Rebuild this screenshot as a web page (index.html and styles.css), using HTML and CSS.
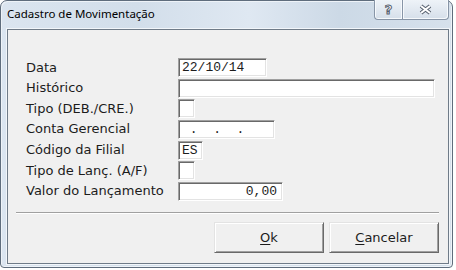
FILE: index.html
```html
<!DOCTYPE html>
<html lang="pt-BR">
<head>
<meta charset="utf-8">
<title>Cadastro de Movimentação</title>
<link rel="stylesheet" href="styles.css">
</head>
<body>
<div class="window">
  <div class="titlebar">
    <span class="title">Cadastro de Movimentação</span>
    <div class="caption-buttons">
      <div class="cbtn help"><span class="qmark">?</span></div>
      <div class="cbtn close">
        <svg width="13" height="11" viewBox="0 0 13 11">
          <path d="M2 2 L11 9 M11 2 L2 9" stroke="#56606e" stroke-width="4" fill="none"/>
          <path d="M2 2 L11 9 M11 2 L2 9" stroke="#ffffff" stroke-width="2" fill="none"/>
        </svg>
      </div>
    </div>
  </div>
  <div class="client">
    <div class="form">
      <span class="lbl">Data</span><input class="fld w-data" type="text" value="22/10/14" readonly>
      <span class="lbl">Histórico</span><input class="fld w-hist" type="text" value="" readonly>
      <span class="lbl">Tipo (DEB./CRE.)</span><input class="fld w-chk" type="text" value="" readonly>
      <span class="lbl">Conta Gerencial</span><input class="fld w-conta" type="text" value=" .  .  . " readonly>
      <span class="lbl">Código da Filial</span><input class="fld w-cod" type="text" value="ES" readonly>
      <span class="lbl">Tipo de Lanç. (A/F)</span><input class="fld w-chk" type="text" value="" readonly>
      <span class="lbl">Valor do Lançamento</span><input class="fld w-valor num" type="text" value="0,00" readonly>
    </div>
    <div class="sep"></div>
    <div class="buttons">
      <button class="btn" type="button"><u>O</u>k</button>
      <button class="btn" type="button"><u>C</u>ancelar</button>
    </div>
  </div>
</div>
</body>
</html>
```
FILE: styles.css
```css
html, body {
  margin: 0;
  padding: 0;
  background: #ffffff;
}

.window {
  box-sizing: border-box;
  width: 453px;
  height: 268px;
  border: 1px solid #5f6d7d;
  border-radius: 7px 7px 4px 4px;
  background: linear-gradient(to right, #dbe5f0 0%, #d2deea 30%, #dfe8f2 55%, #ccd9e6 75%, #d6e1ec 100%);
  box-shadow: inset 1px 1px 0 #eef3f8, inset -1px -1px 0 #eef3f8;
  padding: 0 3px 3px 6px;
  display: flex;
  flex-direction: column;
}

.titlebar {
  height: 28px;
  display: flex;
  align-items: flex-start;
}

.title {
  font-family: "Noto Sans", "Open Sans", sans-serif;
  font-size: 11.5px;
  color: #000;
  padding-top: 4px;
  line-height: 17px;
}

.caption-buttons {
  margin-left: auto;
  margin-top: -1px;
  display: flex;
}

.cbtn {
  box-sizing: border-box;
  height: 20px;
  border: 1px solid #8795a7;
  border-top: none;
  background: linear-gradient(to bottom, #eef3f8 0%, #e2e9f1 50%, #d5dfea 100%);
  box-shadow: inset 1px 0 0 #f6f9fc, inset -1px -1px 0 #f6f9fc;
  display: flex;
  align-items: center;
  justify-content: center;
}

.help {
  width: 28px;
  border-right: none;
  border-radius: 0 0 0 4px;
}

.close {
  width: 47px;
  border-radius: 0 0 4px 0;
}

.qmark {
  font-family: "DejaVu Sans", sans-serif;
  font-weight: bold;
  font-size: 13px;
  line-height: 13px;
  color: #ffffff;
  -webkit-text-stroke: 1px #56606e;
}

.client {
  box-sizing: border-box;
  width: 442px;
  height: 235px;
  border: 1px solid #6f7b88;
  box-shadow: 0 0 0 1px #f2f6fa;
  background: #f0f0f0;
  display: flex;
  flex-direction: column;
}

.form {
  padding: 28px 0 0 18px;
  display: grid;
  grid-template-columns: 152px auto;
  grid-auto-rows: 19px;
  row-gap: 1.67px;
  align-items: center;
  justify-items: start;
}

.lbl {
  font-family: "DejaVu Sans", sans-serif;
  font-size: 13px;
  color: #1c1c1c;
  line-height: 16px;
}

.fld {
  box-sizing: border-box;
  height: 19px;
  margin: 0;
  padding: 0 3px 0 3px;
  border: 1px solid;
  border-color: #a0a0a0 #ffffff #ffffff #a0a0a0;
  box-shadow: inset 1px 1px 0 #696969, inset -1px -1px 0 #e3e3e3;
  background: #ffffff;
  font-family: "Liberation Mono", "Courier New", monospace;
  font-size: 13px;
  color: #1c1c1c;
  outline: none;
  white-space: pre;
}

.num {
  text-align: right;
  padding-right: 5px;
}

.w-data { width: 89px; }
.w-hist { width: 257px; }
.w-chk { width: 17px; }
.w-conta { width: 97px; }
.w-cod { width: 25px; }
.w-valor { width: 105px; }

.sep {
  margin: 11px 9px 0 8px;
  height: 0;
  border-top: 1px solid #a0a0a0;
  border-bottom: 1px solid #ffffff;
}

.buttons {
  margin-top: 8px;
  padding-right: 9px;
  display: flex;
  justify-content: flex-end;
  gap: 5px;
}

.btn {
  box-sizing: border-box;
  width: 110px;
  height: 31px;
  margin: 0;
  padding: 0;
  border: 1px solid;
  border-color: #e3e3e3 #696969 #696969 #e3e3e3;
  box-shadow: inset 1px 1px 0 #ffffff, inset -1px -1px 0 #a0a0a0;
  background: #f0f0f0;
  font-family: "DejaVu Sans", sans-serif;
  font-size: 13px;
  color: #1c1c1c;
}

.btn u {
  text-decoration: underline;
  text-underline-offset: 2px;
}
```
